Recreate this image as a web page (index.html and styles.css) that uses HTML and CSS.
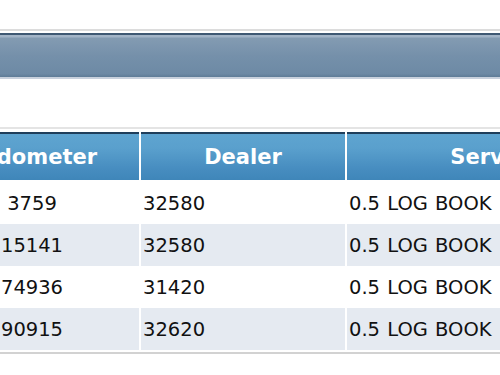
FILE: index.html
```html
<!DOCTYPE html>
<html>
<head>
<meta charset="utf-8">
<link rel="stylesheet" href="styles.css">
</head>
<body>
<div class="topline"></div>
<div class="bar"></div>
<div class="grid-wrap">
  <table class="grid">
    <thead>
      <tr>
        <th class="c1">Odometer</th>
        <th class="c2">Dealer</th>
        <th class="c3">Service</th>
      </tr>
    </thead>
    <tbody>
      <tr><td class="c1">3759</td><td class="c2">32580</td><td class="c3">0.5 LOG BOOK</td></tr>
      <tr class="alt"><td class="c1">15141</td><td class="c2">32580</td><td class="c3">0.5 LOG BOOK</td></tr>
      <tr><td class="c1">74936</td><td class="c2">31420</td><td class="c3">0.5 LOG BOOK</td></tr>
      <tr class="alt"><td class="c1">90915</td><td class="c2">32620</td><td class="c3">0.5 LOG BOOK</td></tr>
    </tbody>
  </table>
</div>
</body>
</html>
```
FILE: styles.css
```css
html, body {
  margin: 0;
  padding: 0;
  background: #ffffff;
  overflow: hidden;
}
body {
  width: 500px;
  height: 375px;
  font-family: "DejaVu Sans", Verdana, sans-serif;
}
.topline {
  margin-top: 29px;
  height: 2px;
  background: #dcdcdc;
}
.bar {
  margin-top: 2px;
  height: 42px;
  border-top: 2px solid #3e5873;
  border-bottom: 2px solid #c8d1dd;
  background: linear-gradient(#a2b4c7 0, #a2b4c7 2px, #839bb2 3px, #7590aa 50%, #6d8aa5 92%, #5e7c97 100%);
}
.grid-wrap {
  margin-top: 48px;
  margin-left: -75px;
  width: 900px;
  border-top: 2px solid #e4e4e4;
  border-bottom: 2px solid #d2d2d2;
  padding-top: 3px;
  padding-bottom: 2px;
}
.grid {
  border-collapse: separate;
  border-spacing: 2px 0;
  margin-left: -2px;
}
.grid th {
  height: 46px;
  padding: 0;
  border-top: 2px solid #1f3e5b;
  border-bottom: 2px solid #ffffff;
  background: linear-gradient(#5ea4d0 0, #5aa0cd 30%, #478dc0 75%, #3f86b9 100%);
  color: #ffffff;
  font-weight: bold;
  font-size: 21px;
  text-align: center;
  white-space: nowrap;
}
.grid td {
  height: 42px;
  padding: 0 0 0 2px;
  font-size: 19.5px;
  word-spacing: 1px;
  color: #111111;
  white-space: nowrap;
  background: #ffffff;
}
.grid tr.alt td {
  background: #e5eaf1;
}
.c1 { width: 214px; }
.c2 { width: 202px; }
.c3 { width: 292px; }
.grid td.c1 {
  text-align: center;
  padding: 0;
}
.grid th.c1 {
  padding-left: 12px;
  width: 202px;
}
```
